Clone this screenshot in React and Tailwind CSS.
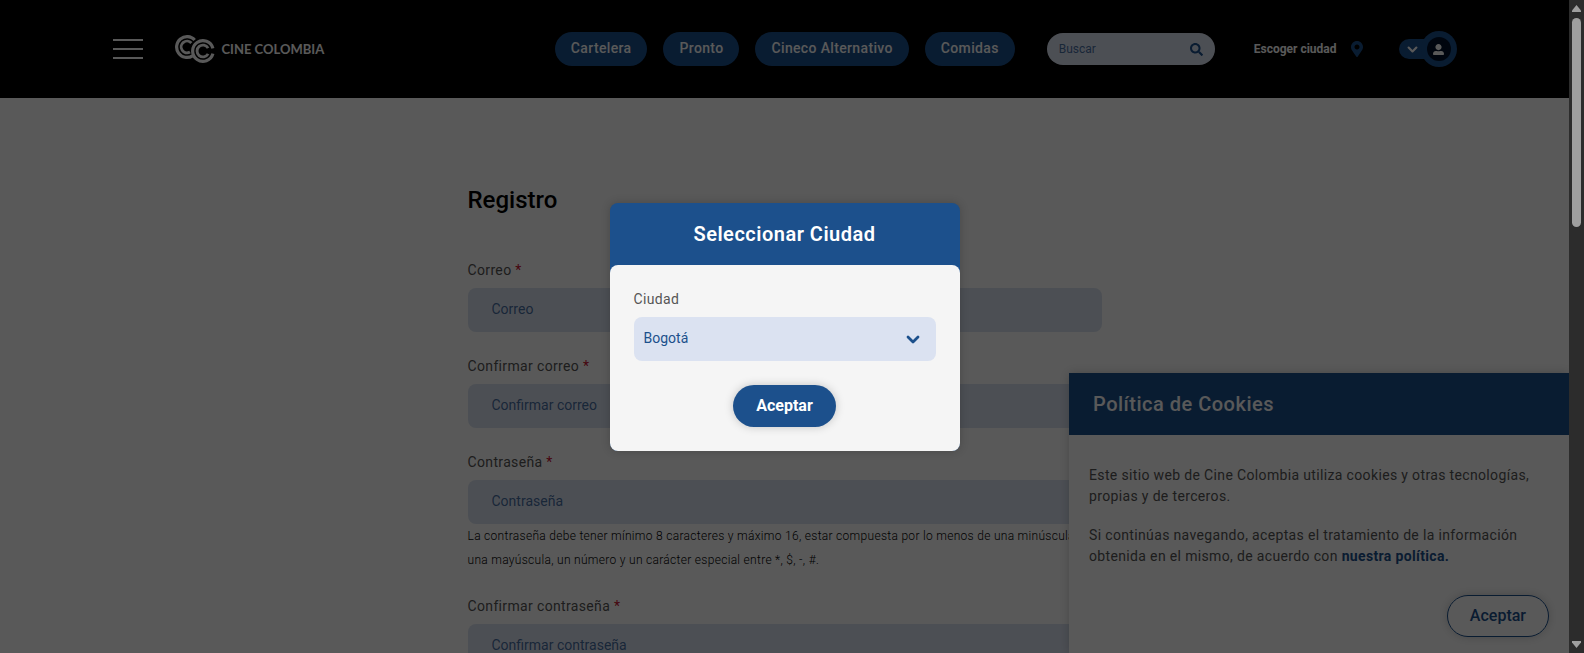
import { FaSearch, FaMapMarkerAlt, FaUserAlt } from "react-icons/fa";

const navItems = ["Cartelera", "Pronto", "Cineco Alternativo", "Comidas"];

function Logo() {
  return (
    <a href="#inicio" aria-label="Cine Colombia" className="flex items-center gap-[7px] text-white">
      <svg viewBox="0 0 40 28" className="h-7 w-10" fill="none" stroke="currentColor">
        <path d="M19.7 5A10.4 10.4 0 1 0 17.6 20.8" strokeWidth="3.2" />
        <path d="M16.4 8A5.9 5.9 0 1 0 15 17.1" strokeWidth="2.9" />
        <path d="M37.9 13.4A10.3 10.3 0 1 0 37.9 18.6" strokeWidth="3.2" />
        <path d="M33.1 13.1A5.9 5.9 0 1 0 33.1 18.9" strokeWidth="2.9" />
      </svg>
      <span className="whitespace-nowrap pt-0.5 font-[Lato,sans-serif] text-[13px] font-bold">CINE COLOMBIA</span>
    </a>
  );
}

function Chevron({ className }) {
  return (
    <svg viewBox="0 0 14 9" className={className} fill="none" stroke="currentColor" strokeWidth="2.8" strokeLinecap="round" strokeLinejoin="round" aria-hidden="true">
      <path d="M2 2L7 7L12 2" />
    </svg>
  );
}

function Header() {
  return (
    <header className="bg-black">
      <div className="mx-auto flex h-[98px] max-w-[1344px] items-center">
        <button aria-label="Menú" className="mr-8 flex w-[30px] flex-col gap-[7px]">
          <span className="h-0.5 bg-white" />
          <span className="h-0.5 bg-white" />
          <span className="h-0.5 bg-white" />
        </button>
        <Logo />
        <nav className="ml-auto flex gap-4">
          {navItems.map((item) => (
            <a key={item} href="#" className="whitespace-nowrap rounded-full bg-[#1c508c] px-4 pb-2 pt-1.5 text-sm font-medium tracking-wide text-white">
              {item}
            </a>
          ))}
        </nav>
        <form className="ml-8 flex h-8 w-[168px] items-center rounded-full bg-[#dbe2f1] px-3 text-[#1c508c]">
          <input aria-label="Buscar" placeholder="Buscar" className="w-full min-w-0 bg-transparent text-xs outline-none placeholder:text-[#1c508c]/80" />
          <button type="button" aria-label="Buscar">
            <FaSearch size={13} />
          </button>
        </form>
        <button className="ml-[39px] flex items-center gap-[14px] text-xs font-bold text-white">
          Escoger ciudad
          <FaMapMarkerAlt size={16} className="w-3 text-[#1c508c]" />
        </button>
        <button aria-label="Mi cuenta" className="ml-9 flex items-center text-white">
          <span className="-mr-3 flex h-5 w-[34px] items-center rounded-l-full bg-[#1c508c] pl-2">
            <Chevron className="h-[7px] w-[11px]" />
          </span>
          <span className="flex size-9 items-center justify-center rounded-full bg-[#1c508c]">
            <span className="flex size-6 items-center justify-center rounded-full bg-[#00112a]">
              <FaUserAlt size={11} />
            </span>
          </span>
        </button>
      </div>
    </header>
  );
}

function Field({ id, label, type = "text", children }) {
  return (
    <div className="mb-6">
      <label htmlFor={id} className="mb-2 block text-sm leading-5 tracking-wide text-[#555]">
        {label} <span className="text-[#c8102e]">*</span>
      </label>
      <input
        id={id}
        type={type}
        placeholder={label}
        className="block h-11 w-full rounded-lg bg-[#dbe2f1] px-6 pb-0.5 text-sm outline-none placeholder:text-[#1c508c]/80"
      />
      {children}
    </div>
  );
}

function RegisterForm() {
  return (
    <form className="mx-auto max-w-[634px] pt-[86px]">
      <h1 className="mb-11 text-2xl font-medium text-black">Registro</h1>
      <Field id="correo" label="Correo" type="email" />
      <Field id="confirmar-correo" label="Confirmar correo" type="email" />
      <Field id="contrasena" label="Contraseña" type="password">
        <p className="pr-5 text-xs leading-6 font-light tracking-wide text-black">
          La contraseña debe tener mínimo 8 caracteres y máximo 16, estar compuesta por lo menos de una minúscula,
          una mayúscula, un número y un carácter especial entre *, $, -, #.
        </p>
      </Field>
      <Field id="confirmar-contrasena" label="Confirmar contraseña" type="password" />
    </form>
  );
}

function CookiePanel() {
  return (
    <section className="absolute bottom-0 right-0 w-[500px] bg-white shadow-[0_0_10px_rgba(0,0,0,0.2)]">
      <h2 className="bg-[#1c508c] px-6 py-4 text-xl leading-[30px] font-medium tracking-wide text-white">Política de Cookies</h2>
      <div className="flex flex-col px-5 pb-4 pt-[30px] text-sm leading-[21px] tracking-wide text-[#555]">
        <p className="mb-[18px]">Este sitio web de Cine Colombia utiliza cookies y otras tecnologías, propias y de terceros.</p>
        <p className="mb-7">
          Si continúas navegando, aceptas el tratamiento de la información obtenida en el mismo, de acuerdo con{" "}
          <a href="#politica" className="font-bold text-[#1c508c]">nuestra política.</a>
        </p>
        <button className="h-[42px] self-end rounded-full border border-[#1c508c] px-[22px] text-base font-medium tracking-normal text-[#1c508c] shadow-[0_0_10px_rgba(0,0,0,0.2)]">
          Aceptar
        </button>
      </div>
    </section>
  );
}

function CityDialog() {
  return (
    <div className="absolute inset-0 flex items-center justify-center bg-black/65">
      <div role="dialog" aria-labelledby="city-title" className="w-[350px] rounded-lg bg-[#1c508c] shadow-[0_0_10px_rgba(0,0,0,0.2)]">
        <h2 id="city-title" className="py-4 text-center text-xl leading-[30px] font-semibold tracking-wide text-white">Seleccionar Ciudad</h2>
        <div className="flex flex-col rounded-lg bg-[#f5f5f5] p-6">
          <label htmlFor="ciudad" className="mb-2 text-sm leading-5 tracking-wide text-[#555]">Ciudad</label>
          <div className="relative mb-6">
            <select id="ciudad" className="h-11 w-full appearance-none rounded-lg bg-[#dbe2f1] px-[10px] pb-0.5 text-sm text-[#1c508c] outline-none">
              <option>Bogotá</option>
            </select>
            <Chevron className="pointer-events-none absolute right-4 top-[18px] h-[9px] w-[14px] text-[#1c508c]" />
          </div>
          <button className="h-[42px] self-center rounded-full bg-[#1c508c] px-[23px] text-base font-bold text-white shadow-[0_0_10px_rgba(0,0,0,0.2)]">
            Aceptar
          </button>
        </div>
      </div>
    </div>
  );
}

function ScrollRail() {
  return (
    <div aria-hidden="true" className="flex w-[15px] shrink-0 flex-col items-center bg-[#2c2c2c] py-1 text-[#9f9f9f]">
      <svg viewBox="0 0 9 8" className="mb-1.5 h-2 w-[9px]" fill="currentColor"><path d="M4.5 1L9 6.5V8H0V6.5Z" /></svg>
      <div className="h-[209px] w-[9px] rounded-full bg-[#9f9f9f]" />
      <svg viewBox="0 0 9 8" className="mt-auto h-2 w-[9px]" fill="currentColor"><path d="M4.5 7L9 1.5V0H0V1.5Z" /></svg>
    </div>
  );
}

export default function App() {
  return (
    <div className="flex h-screen overflow-hidden font-[Roboto,sans-serif]">
      <div className="relative min-w-0 flex-1 overflow-hidden bg-white">
        <Header />
        <main>
          <RegisterForm />
        </main>
        <CookiePanel />
        <CityDialog />
      </div>
      <ScrollRail />
    </div>
  );
}
